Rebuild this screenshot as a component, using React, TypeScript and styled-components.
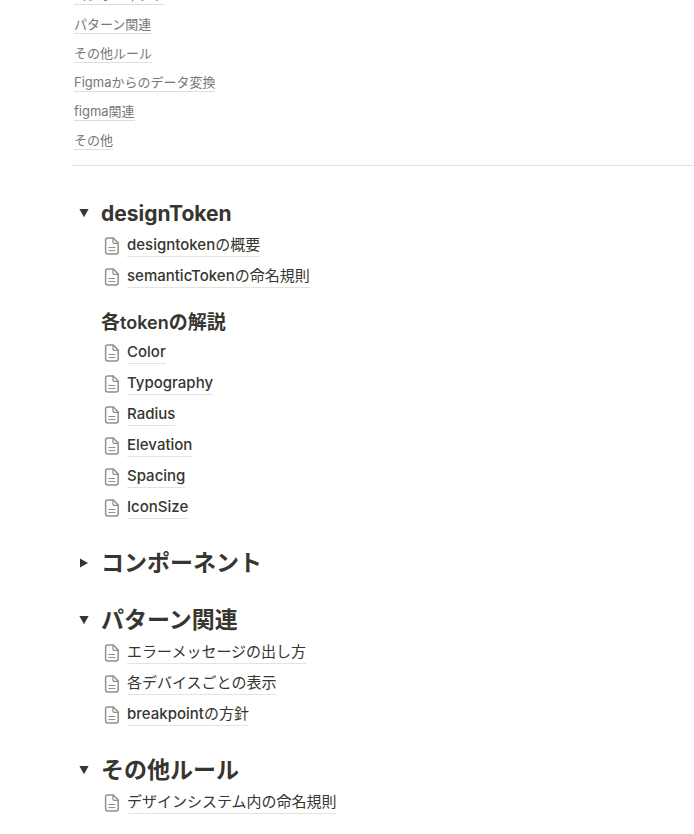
import React, { useState } from "react";
import styled, { createGlobalStyle } from "styled-components";

const GlobalStyle = createGlobalStyle`
  *, *::before, *::after { box-sizing: border-box; }
  body {
    margin: 0;
    background: #ffffff;
    color: #37352f;
    font-family: Inter, "Noto Sans CJK JP", sans-serif;
  }
`;

const Page = styled.main`
  overflow: hidden;
  padding: 0 0 16px 72px;
`;

const Contents = styled.nav`
  display: flex;
  flex-direction: column;
  margin-top: -19px;
  padding-bottom: 10px;
  border-bottom: 1px solid #e3e3e1;
`;

const ContentsRow = styled.div`
  display: flex;
  align-items: center;
  height: 29px;
  padding-left: 2px;
`;

const ContentsLink = styled.a`
  border-bottom: 1px solid #dededc;
  color: #787774;
  font-size: 13px;
  line-height: 18px;
  text-decoration: none;
  white-space: nowrap;
`;

const Sections = styled.div`
  display: flex;
  flex-direction: column;
  gap: 23px;
  padding: 30px 0 0 2px;
`;

const SectionHead = styled.div`
  display: flex;
  align-items: center;
  height: 34px;
  gap: 7px;
`;

const Toggle = styled.button`
  display: flex;
  align-items: center;
  justify-content: center;
  width: 20px;
  height: 24px;
  padding: 0;
  border: 0;
  background: none;
  color: #37352f;
  cursor: pointer;
`;

const Title = styled.h2`
  margin: 0;
  font-size: 23px;
  font-weight: 700;
  line-height: 34px;
  white-space: nowrap;
`;

const Subtitle = styled.h3`
  margin: 17px 0 0 27px;
  font-size: 19px;
  font-weight: 700;
  line-height: 28px;
`;

const PageList = styled.ul`
  display: flex;
  flex-direction: column;
  margin: 0;
  padding: 0 0 0 29px;
  list-style: none;
`;

const PageRow = styled.li`
  display: flex;
  align-items: center;
  gap: 6px;
  height: 31px;
`;

const PageLink = styled.a`
  border-bottom: 1px solid #e3e3e1;
  color: #37352f;
  font-size: 15px;
  line-height: 22px;
  text-decoration: none;
  white-space: nowrap;
`;

const Latin = styled.span<{ $size: number; $weight: number }>`
  font-size: ${(p) => p.$size}px;
  font-weight: ${(p) => p.$weight};
`;

const DocIcon = styled.svg`
  flex: none;
  width: 18px;
  height: 20px;
  fill: none;
  stroke: #91918e;
  stroke-linejoin: round;
  stroke-linecap: round;
`;

function MixedText({ text, size, weight }: { text: string; size: number; weight: number }) {
  const parts = text.split(/([A-Za-z]+)/).filter(Boolean);
  return (
    <>
      {parts.map((part, i) =>
        /^[A-Za-z]/.test(part) ? (
          <Latin key={i} $size={size} $weight={weight}>{part}</Latin>
        ) : (
          part
        )
      )}
    </>
  );
}

function PageIcon() {
  return (
    <DocIcon viewBox="0 0 18 20" aria-hidden="true">
      <path
        d="M4.7 1.9H10.3L15.2 6.9V15.8Q15.2 17.9 13.1 17.9H4.7Q2.6 17.9 2.6 15.8V4Q2.6 1.9 4.7 1.9Z"
        strokeWidth="1.5"
      />
      <path d="M10 2.2V5.8Q10 7.3 11.5 7.3H15" strokeWidth="1.3" />
      <path d="M5.9 11.5H12M5.9 14.5H12" strokeWidth="1.1" />
    </DocIcon>
  );
}

function Pages({ items }: { items: string[] }) {
  return (
    <PageList>
      {items.map((item) => (
        <PageRow key={item}>
          <PageIcon />
          <PageLink href="#">
            <MixedText text={item} size={15} weight={500} />
          </PageLink>
        </PageRow>
      ))}
    </PageList>
  );
}

type SectionProps = {
  title: string;
  defaultOpen?: boolean;
  children?: React.ReactNode;
};

function Section({ title, defaultOpen = true, children }: SectionProps) {
  const [open, setOpen] = useState(defaultOpen);
  return (
    <section>
      <SectionHead>
        <Toggle type="button" aria-label={title} aria-expanded={open} onClick={() => setOpen(!open)}>
          <svg width="10" height="10" viewBox="0 0 10 10" fill="currentColor" aria-hidden="true">
            <path d={open ? "M0.4 1H9.6L5 9.2Z" : "M1 0.6L9 5L1 9.4Z"} />
          </svg>
        </Toggle>
        <Title>
          <MixedText text={title} size={21} weight={700} />
        </Title>
      </SectionHead>
      {open && children}
    </section>
  );
}

const contents = [
  "コンポーネント",
  "パターン関連",
  "その他ルール",
  "Figmaからのデータ変換",
  "figma関連",
  "その他",
];

export default function App() {
  return (
    <>
      <GlobalStyle />
      <Page>
        <Contents>
          {contents.map((item) => (
            <ContentsRow key={item}>
              <ContentsLink href="#">{item}</ContentsLink>
            </ContentsRow>
          ))}
        </Contents>
        <Sections>
          <Section title="designToken">
            <Pages items={["designtokenの概要", "semanticTokenの命名規則"]} />
            <Subtitle>
              <MixedText text="各tokenの解説" size={18} weight={600} />
            </Subtitle>
            <Pages items={["Color", "Typography", "Radius", "Elevation", "Spacing", "IconSize"]} />
          </Section>
          <Section title="コンポーネント" defaultOpen={false} />
          <Section title="パターン関連">
            <Pages items={["エラーメッセージの出し方", "各デバイスごとの表示", "breakpointの方針"]} />
          </Section>
          <Section title="その他ルール">
            <Pages items={["デザインシステム内の命名規則"]} />
          </Section>
        </Sections>
      </Page>
    </>
  );
}
